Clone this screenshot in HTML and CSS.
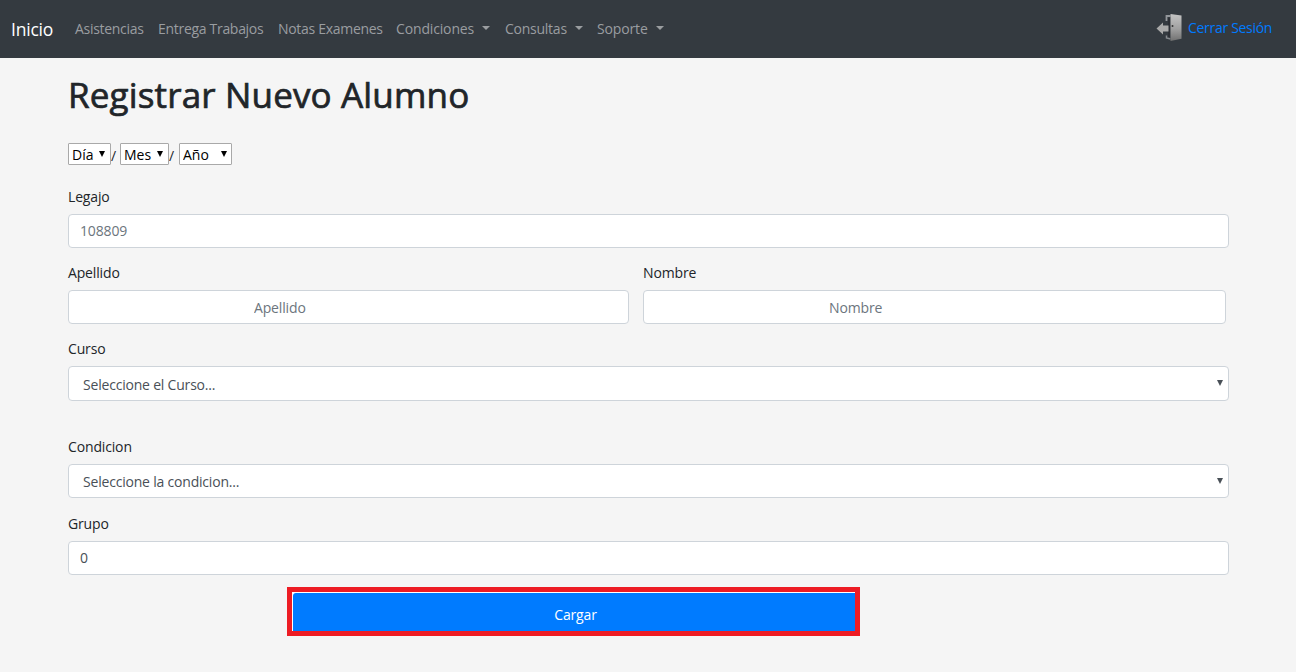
FILE: index.html
```html
<!DOCTYPE html>
<html lang="es">
<head>
<meta charset="utf-8">
<title>Registrar Nuevo Alumno</title>
<link rel="stylesheet" href="styles.css">
</head>
<body>
<nav class="navbar">
  <a class="brand">Inicio</a>
  <div class="links">
    <a class="link asistencias">Asistencias</a>
    <a class="link trabajos">Entrega Trabajos</a>
    <a class="link notas">Notas Examenes</a>
    <a class="link condiciones">Condiciones<i class="caret"></i></a>
    <a class="link consultas">Consultas<i class="caret"></i></a>
    <a class="link soporte">Soporte<i class="caret"></i></a>
  </div>
  <a class="logout">
    <svg class="door" width="28" height="30" viewBox="0 0 28 30">
      <defs>
        <linearGradient id="metal" x1="0" y1="0" x2="0" y2="1">
          <stop offset="0" stop-color="#c4c4c4"/><stop offset=".55" stop-color="#a0a0a0"/><stop offset="1" stop-color="#707070"/>
        </linearGradient>
      </defs>
      <path d="M14.500 3H10.500V8" fill="none" stroke="#92969a" stroke-width="1.800"/>
      <path d="M10.500 22.500V25L14.500 26" fill="none" stroke="#85898d" stroke-width="1.500"/>
      <path d="M13 5V24" stroke="#2b2e33" stroke-width="1.500"/>
      <path d="M14.500 1 25.500 2.500V25.700L14.500 28Z" fill="url(#metal)"/>
      <path d="M.5 15.500 7 9.500V12.500H12.500V18.500H7V21.500Z" fill="#a9a9a9"/>
      <circle cx="16.500" cy="13" r="1" fill="#333"/>
    </svg>
    <span>Cerrar Sesión</span>
  </a>
</nav>
<main class="page">
  <h1 class="title">Registrar Nuevo Alumno</h1>
  <form>
    <div class="dates">
      <span class="pick day"><select class="date"><option>Día</option></select></span><span class="slash">/</span>
      <span class="pick month"><select class="date"><option>Mes</option></select></span><span class="slash wide">/</span>
      <span class="pick year"><select class="date"><option>Año</option></select></span>
    </div>
    <div class="group">
      <label class="label">Legajo</label>
      <input class="control" placeholder="108809">
    </div>
    <div class="row">
      <div class="group surname">
        <label class="label">Apellido</label>
        <input class="control indented" placeholder="Apellido">
      </div>
      <div class="group name">
        <label class="label">Nombre</label>
        <input class="control indented" placeholder="Nombre">
      </div>
    </div>
    <div class="group course">
      <label class="label">Curso</label>
      <div class="pick"><select class="control select"><option>Seleccione el Curso...</option></select></div>
    </div>
    <div class="group condition">
      <label class="label">Condicion</label>
      <div class="pick"><select class="control select"><option>Seleccione la condicion...</option></select></div>
    </div>
    <div class="group team">
      <label class="label">Grupo</label>
      <input class="control" value="0">
    </div>
    <div class="submit-frame"><button class="submit" type="button">Cargar</button></div>
  </form>
</main>
</body>
</html>
```
FILE: styles.css
```css
* { box-sizing: border-box; }
body {
  margin: 0;
  background: #f5f5f5;
  color: #212529;
  font: 14px/20px "Segoe UI", "Open Sans", "Noto Sans", sans-serif;
  letter-spacing: -.15px;
  overflow: hidden;
}
.navbar {
  display: flex;
  align-items: center;
  height: 58px;
  padding: 0 14px 0 11px;
  background: #343a40;
}
.brand { width: 64px; color: #fff; font-size: 17.500px; letter-spacing: -.2px; }
.links { display: flex; color: #9a9da0; }
.link { display: flex; align-items: center; justify-content: space-between; margin-right: 14px; letter-spacing: -.3px; white-space: nowrap; }
.asistencias { width: 69px; }
.trabajos { width: 106px; }
.notas { width: 104px; }
.condiciones { width: 94px; margin-right: 15px; letter-spacing: -.15px; }
.consultas { width: 78px; letter-spacing: -.25px; }
.soporte { width: 67px; letter-spacing: -.15px; }
.caret { border: 4px solid transparent; border-top-color: currentColor; border-bottom: 0; margin-top: -2px; }
.logout { display: flex; align-items: center; width: 126px; margin-left: auto; color: #007bff; letter-spacing: -.3px; white-space: nowrap; }
.logout span { margin: -3px 0 0 4px; }
.door { flex: none; margin-top: -3px; }
.page { width: 1161px; margin-left: 68px; padding-top: 16px; }
.title { margin: 0; height: 69px; font-size: 35px; font-weight: 500; line-height: 42px; letter-spacing: .16px; -webkit-text-stroke: .7px #212529; }
.dates { display: flex; height: 44px; }
.pick { position: relative; display: block; }
.pick::after {
  content: "";
  position: absolute;
  top: 14px;
  right: 6px;
  border: 3.500px solid transparent;
  border-top: 6px solid #495057;
  border-bottom: 0;
}
.dates .pick::after { top: 8px; border-top-color: #000; }
.dates .year::after { right: 5px; }
.date {
  appearance: none;
  width: 100%;
  height: 22px;
  padding: 1px 3px 0;
  border: 1px solid #a9a9a9;
  border-radius: 1px;
  background: #fff;
  color: #000;
  font: inherit;
  line-height: 19px;
}
.day { width: 43px; }
.month { width: 49px; }
.year { width: 53px; }
.slash { width: 9px; padding-top: 3px; }
.wide { width: 10px; }
.group { margin-bottom: 15px; }
.label { display: block; margin-bottom: 7px; }
.control {
  display: block;
  width: 100%;
  height: 34px;
  padding: 0 11px 1px;
  border: 1px solid #ced4da;
  border-radius: 4px;
  background: #fff;
  color: #495057;
  font: inherit;
  letter-spacing: -.15px;
}
.control::placeholder { color: #6c757d; opacity: 1; }
.indented { padding: 1px 11px 0 185px; }
.row { display: flex; gap: 14px; }
.surname { width: 561px; }
.name { width: 583px; }
.select { appearance: none; padding: 2px 14px 0; letter-spacing: -.2px; }
.course { margin-bottom: 36px; }
.course .control { height: 35px; padding-top: 3px; }
.condition { margin-bottom: 16px; }
.team { margin-bottom: 12px; }
.submit-frame { width: 573px; height: 49px; margin-left: 219px; padding: 1px 0 0 1px; border: 5px solid #ed1c24; background: #fff; }
.submit { display: block; width: 100%; height: 100%; padding: 5px 0 0 3px; border: 0; border-radius: 3px 0 0 0; background: #007bff; color: #fff; font: inherit; letter-spacing: -.15px; }
```
